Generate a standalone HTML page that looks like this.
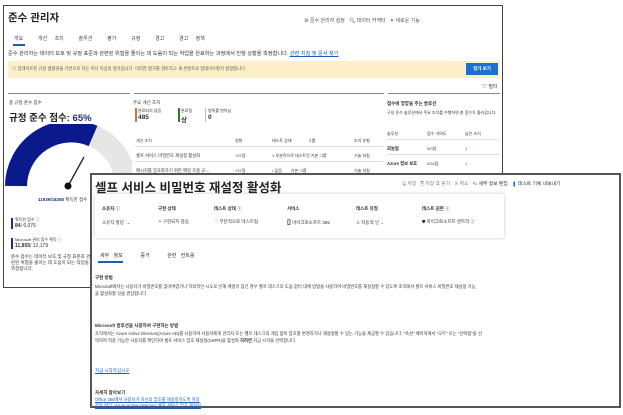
<!DOCTYPE html>
<html><head><meta charset="utf-8"><style>
*{box-sizing:border-box;margin:0;padding:0}
body{width:623px;height:415px;background:#fff;position:relative;overflow:hidden;font-family:"Liberation Sans","Noto Sans CJK KR",sans-serif;color:#333;font-size:5px}
.a{position:absolute;white-space:nowrap}
#back{position:absolute;left:3px;top:5px;width:500px;height:283px;border:1.5px solid #444;background:#fff}
#front{position:absolute;left:90px;top:173px;width:531px;height:235px;border:2px solid #555;background:#fff}
.b{font-weight:bold}
.lnk{color:#1a5fb4;text-decoration:underline}
.g{color:#777}
</style></head><body>
<div id="back">
 <div class="a b" style="left:4px;top:4px;font-size:10.5px;color:#222">준수 관리자</div>
 <div class="a" style="left:300px;top:11px;font-size:5px;color:#555"><span style="color:#1a5fb4">⚙</span> 준수 관리자 설정 &nbsp; <span style="color:#1a5fb4">🔍</span> 데이터 커넥터 &nbsp; <span style="color:#1a5fb4">✦</span> 새로운 기능</div>
 <div class="a" style="left:10px;top:29px;font-size:5px;color:#444;word-spacing:6px">개요 &nbsp;개선 조치 &nbsp;솔루션 &nbsp;평가 &nbsp;규정 &nbsp;경고 &nbsp;경고 정책</div>
 <div class="a" style="left:9px;top:38px;width:12px;height:1.5px;background:#1a5fb4"></div>
 <div class="a" style="left:4px;top:44px;font-size:5.2px;color:#333">준수 관리자는 데이터 보호 및 규정 표준과 관련된 위험을 줄이는 데 도움이 되는 작업을 완료하는 과정에서 진행 상황을 측정합니다. <span class="lnk">관련 지침 및 문서 찾기</span></div>
 <div class="a" style="left:4px;top:55px;width:492px;height:17px;background:#fdf0c8"></div>
 <div class="a" style="left:8px;top:60px;font-size:4.3px;color:#555">ⓘ 업데이트된 규정 템플릿을 기반으로 하는 하나 이상의 평가입니다. 이러한 평가를 검토하고 새 콘텐츠로 업데이트할지 결정합니다.</div>
 <div class="a b" style="left:462px;top:57px;width:32px;height:12px;background:#1a6fd0;color:#fff;font-size:4.5px;text-align:center;line-height:12px">평가 보기</div>
 <div class="a" style="left:478px;top:77px;font-size:5px;color:#1a5fb4">▽ <span style="color:#444">필터</span></div>
 <div class="a" style="left:4px;top:87px;width:122px;height:1px;background:#888"></div>
 <div class="a" style="left:130px;top:87px;width:250px;height:1px;background:#888"></div>
 <div class="a" style="left:384px;top:87px;width:112px;height:1px;background:#888"></div>
 <div class="a" style="left:5px;top:94px;font-size:4.5px">총 규정 준수 점수</div>
 <div class="a b" style="left:5px;top:104px;font-size:9.5px;color:#222">규정 준수 점수: <span style="color:#1f2f7a">65%</span></div>
 <svg class="a" style="left:0;top:118px" width="128" height="72">
  <path d="M12 62 A55 55 0 0 1 122 62" fill="none" stroke="#e6e6e6" stroke-width="22"/>
  <path d="M12 62 A55 55 0 0 1 89 12" fill="none" stroke="#0a1a8c" stroke-width="22"/>
  <line x1="64" y1="62" x2="80" y2="33" stroke="#222" stroke-width="1.3"/>
  <circle cx="64" cy="62" r="3.5" fill="#111"/>
 </svg>
 <div class="a b" style="left:34px;top:191px;font-size:4.5px;color:#1f2f7a">11939/18255 <span style="color:#333;font-weight:normal">획득한 점수</span></div>
 <div class="a" style="left:7px;top:212px;width:1.5px;height:11px;background:#1f2f7a"></div>
 <div class="a" style="left:11px;top:211px;font-size:4px">획득한 점수 <span style="color:#1a5fb4">ⓘ</span></div>
 <div class="a" style="left:11px;top:217px;font-size:5px"><b>84</b>/ 6,076</div>
 <div class="a" style="left:7px;top:232px;width:1.5px;height:11px;background:#1f2f7a"></div>
 <div class="a" style="left:11px;top:231px;font-size:4px">Microsoft 관리 점수 획득 <span style="color:#1a5fb4">ⓘ</span></div>
 <div class="a" style="left:11px;top:237px;font-size:5px"><b>11,855</b>/ 12,179</div>
 <div class="a" style="left:7px;top:248px;font-size:4.5px;line-height:6px;white-space:normal;width:80px">준수 점수는 데이터 보호 및 규정 표준과 관련된 위험을 줄이는 데 도움이 되는 작업을 측정합니다.</div>
 <div class="a" style="left:129px;top:94px;font-size:4.5px">주요 개선 조치</div>
 <div class="a" style="left:131px;top:102px;width:1.5px;height:14px;background:#c8724a"></div>
 <div class="a" style="left:134px;top:102px;font-size:4px">완료되지 않음</div>
 <div class="a b" style="left:134px;top:108px;font-size:6.5px">485</div>
 <div class="a" style="left:174px;top:102px;width:1.5px;height:14px;background:#2d7d2d"></div>
 <div class="a" style="left:177px;top:102px;font-size:4px">완료됨</div>
 <div class="a b" style="left:177px;top:108px;font-size:6.5px">상</div>
 <div class="a" style="left:201px;top:102px;width:1px;height:14px;background:#bbb"></div>
 <div class="a" style="left:204px;top:102px;font-size:4px">범위를 벗어남</div>
 <div class="a b" style="left:204px;top:108px;font-size:6.5px">0</div>
 <div class="a" style="left:132px;top:132px;font-size:4px;color:#444">개선 조치</div>
 <div class="a" style="left:231px;top:132px;font-size:4px">영향</div>
 <div class="a" style="left:268px;top:132px;font-size:4px">테스트 상태</div>
 <div class="a" style="left:304px;top:132px;font-size:4px">그룹</div>
 <div class="a" style="left:350px;top:132px;font-size:4px">조치 유형</div>
 <div class="a" style="left:131px;top:140px;width:248px;height:1px;background:#ddd"></div>
 <div class="a" style="left:132px;top:147px;font-size:4.3px">셀프 서비스 비밀번호 재설정 활성화</div>
 <div class="a" style="left:231px;top:147px;font-size:4px">+27점</div>
 <div class="a" style="left:268px;top:147px;font-size:4px"><span style="color:#e08a00">●</span> 부분적으로 테스트된 기본 그룹</div>
 <div class="a" style="left:350px;top:147px;font-size:4px">기술 지침</div>
 <div class="a" style="left:131px;top:155px;width:248px;height:1px;background:#ddd"></div>
 <div class="a" style="left:132px;top:162px;font-size:4.3px">메시지를 암호화하기 위한 메일 흐름 규...</div>
 <div class="a" style="left:231px;top:162px;font-size:4px">+27점</div>
 <div class="a" style="left:268px;top:162px;font-size:4px">• 없음 &nbsp;&nbsp;&nbsp;&nbsp;&nbsp;&nbsp; 기본 그룹</div>
 <div class="a" style="left:350px;top:162px;font-size:4px">기술 지침</div>
 <div class="a b" style="left:383px;top:95px;font-size:4.5px">점수에 영향을 주는 솔루션</div>
 <div class="a" style="left:383px;top:104px;font-size:4px;line-height:5px;white-space:normal;width:112px">구성 준수 솔루션에서 주요 조치를 수행하면 총 점수가 올라갑니다.</div>
 <div class="a" style="left:383px;top:125px;font-size:4px">솔루션</div>
 <div class="a" style="left:423px;top:125px;font-size:4px">점수 기여도</div>
 <div class="a" style="left:461px;top:125px;font-size:4px">남은 조치</div>
 <div class="a" style="left:383px;top:133px;width:112px;height:1px;background:#ddd"></div>
 <div class="a b" style="left:383px;top:140px;font-size:4.3px">회눌됨</div>
 <div class="a" style="left:423px;top:140px;font-size:4px">0/0점</div>
 <div class="a" style="left:461px;top:140px;font-size:4px;color:#1a5fb4">1</div>
 <div class="a" style="left:383px;top:148px;width:112px;height:1px;background:#ddd"></div>
 <div class="a b" style="left:383px;top:155px;font-size:4.3px">Azure 정보 보호</div>
 <div class="a" style="left:423px;top:155px;font-size:4px">0/24점</div>
 <div class="a" style="left:461px;top:155px;font-size:4px;color:#1a5fb4">1</div>
</div>
<div id="front">
 <div class="a b" style="left:3px;top:2px;font-size:12.5px;color:#222">셀프 서비스 비밀번호 재설정 활성화</div>
 <div class="a g" style="left:310px;top:5px;font-size:4.8px">🖫 저장 &nbsp; ⎘ 저장 후 닫기 &nbsp; ✕ 취소 &nbsp; <span style="color:#1a5fb4">✎</span> <span style="color:#333">세부 정보 편집</span> &nbsp; <span style="color:#1a5fb4">▮</span> <span style="color:#333">테스트 기록 내보내기</span></div>
 <div class="a" style="left:3px;top:19px;width:409px;height:44px;background:#fff;box-shadow:0 0 3px rgba(0,0,0,.25)"></div>
 <div class="a b" style="left:10px;top:31px;font-size:4.5px">소유자 ⓘ</div>
 <div class="a" style="left:10px;top:45px;font-size:4.5px">소유자 할당 &nbsp;⌄</div>
 <div class="a b" style="left:66px;top:31px;font-size:4.5px">구현 상태</div>
 <div class="a" style="left:66px;top:44px;font-size:4.5px"><span style="color:#bbb;font-size:6px">●</span> 구현되지 않음</div>
 <div class="a b" style="left:122px;top:31px;font-size:4.5px">테스트 상태 ⓘ</div>
 <div class="a" style="left:122px;top:43px;font-size:4.5px"><span style="color:#e89a1c;font-size:7px">○</span> 부분적으로 테스트됨</div>
 <div class="a b" style="left:195px;top:31px;font-size:4.5px">서비스</div>
 <div class="a" style="left:195px;top:43px;font-size:4.5px"><b style="font-size:7px">▯</b> 마이크로소프트 365</div>
 <div class="a b" style="left:264px;top:31px;font-size:4.5px">테스트 유형</div>
 <div class="a" style="left:264px;top:45px;font-size:4.5px">♙ 자동적 인 ⌄</div>
 <div class="a b" style="left:330px;top:31px;font-size:4.5px">테스트 원본 ⓘ</div>
 <div class="a" style="left:330px;top:44px;font-size:4.5px">⛊ 마이크로소프트 엔트라 ⓘ</div>
 <div class="a" style="left:8px;top:77px;font-size:5px;word-spacing:3px">세부 정보 &nbsp;&nbsp; 증거 &nbsp;&nbsp; 관련 컨트롤</div>
 <div class="a" style="left:6px;top:86px;width:25px;height:1.5px;background:#1a5fb4"></div>
 <div class="a b" style="left:3px;top:100px;font-size:4.5px">구현 방법</div>
 <div class="a" style="left:3px;top:108px;font-size:4.3px;line-height:7px">Microsoft에서는 사용자가 비밀번호를 잊어버렸거나 악의적인 시도로 인해 계정이 잠긴 경우 헬프 데스크의 도움 없이 대체 방법을 사용하여 비밀번호를 재설정할 수 있도록 조직에서 셀프 서비스 비밀번호 재설정 기능<br>을 활성화할 것을 권장합니다.</div>
 <div class="a b" style="left:3px;top:148px;font-size:4.5px">Microsoft 솔루션을 사용하여 구현하는 방법</div>
 <div class="a" style="left:3px;top:155px;font-size:4.3px;line-height:7px">조직에서는 Azure Active Directory(Azure AD)를 사용하여 사용자에게 관리자 또는 헬프 데스크의 개입 없이 암호를 변경하거나 재설정할 수 있는 기능을 제공할 수 있습니다. "속성" 페이지에서 "모두" 또는 "선택됨"을 선<br>택하여 적용 가능한 사용자를 확인하여 셀프 서비스 암호 재설정(SSPR)을 활성화 <b>하려면</b> 지금 시작을 선택합니다.</div>
 <div class="a lnk" style="left:3px;top:193px;font-size:4.5px">지금 시작하십시오</div>
 <div class="a b" style="left:3px;top:215px;font-size:4.5px">자세히 알아보기</div>
 <div class="a lnk" style="left:3px;top:222px;font-size:4.3px">Office 365에서 사용자가 자신의 암호를 재설정하도록 허용</div>
 <div class="a lnk" style="left:3px;top:228px;font-size:4.3px">작동 방식: Azure Active Directory 셀프 서비스 암호 재설정</div>
</div>
</body></html>
